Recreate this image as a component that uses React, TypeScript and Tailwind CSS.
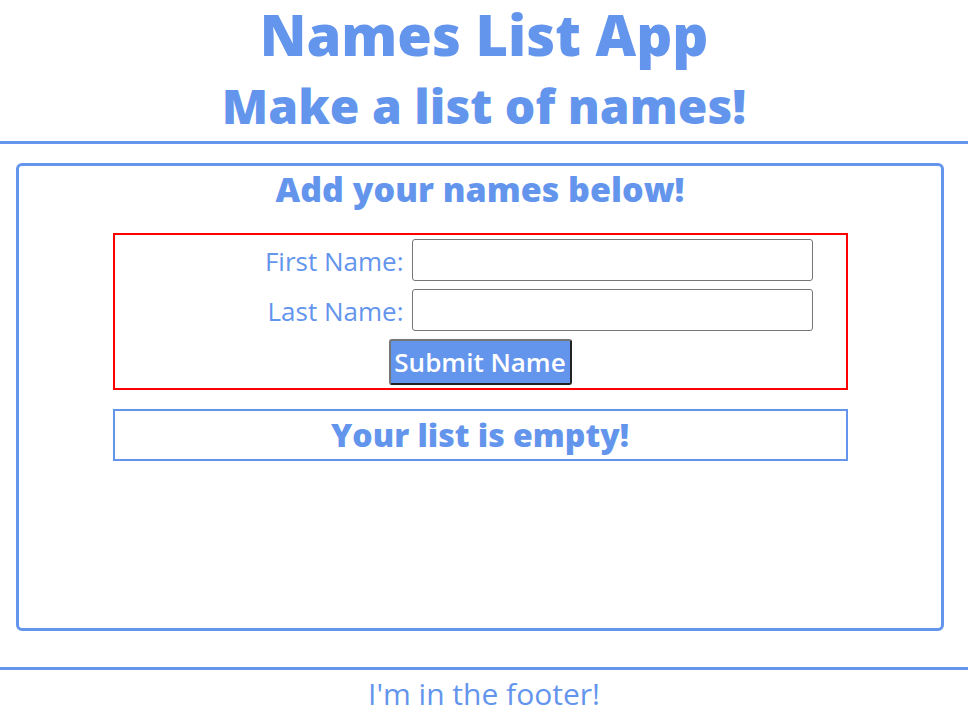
import React, { useState } from 'react';

const font = { fontFamily: '"Open Sans", Lato, sans-serif' };

const NamesForm = () => {
  const [first, setFirst] = useState('');
  const [last, setLast] = useState('');

  return (
    <form
      className="mx-auto mt-[22px] flex h-[157px] w-[735px] flex-col items-center border-2 border-[#ff0000] pt-[4px]"
      onSubmit={(e) => e.preventDefault()}
    >
      <div className="flex h-[50px] w-full items-start">
        <label className="w-[297px] pr-[8px] pt-[5px] text-right text-[26px] leading-[34px] text-[#6495ed]">
          First Name:
        </label>
        <input
          value={first}
          onChange={(e) => setFirst(e.target.value)}
          className="h-[42px] w-[401px] rounded-[3px] border border-[#767676] bg-white"
        />
      </div>
      <div className="flex h-[50px] w-full items-start">
        <label className="w-[297px] pr-[8px] pt-[5px] text-right text-[26px] leading-[34px] text-[#6495ed]">
          Last Name:
        </label>
        <input
          value={last}
          onChange={(e) => setLast(e.target.value)}
          className="h-[42px] w-[401px] rounded-[3px] border border-[#767676] bg-white"
        />
      </div>
      <button
        type="submit"
        className="h-[46px] w-[183px] rounded-[3px] border-2 border-t-[#767676] border-l-[#767676] border-r-[#222] border-b-[#222] bg-[#6495ed] text-[26px] font-semibold leading-[40px] text-white"
      >
        Submit Name
      </button>
    </form>
  );
};

export default function App() {
  return (
    <div className="flex h-[712px] w-[968px] flex-col overflow-hidden bg-white" style={font}>
      <header className="flex h-[141px] shrink-0 flex-col items-center">
        <h1 className="h-[68px] text-[56px] font-extrabold leading-[68px] text-[#6495ed]">
          Names List App
        </h1>
        <h2 className="mt-[8px] h-[60px] text-[48px] font-extrabold leading-[60px] text-[#6495ed]">
          Make a list of names!
        </h2>
      </header>
      <div className="h-[3px] w-full shrink-0 bg-[#6495ed]" />

      <main className="ml-[16px] mt-[19px] h-[468px] w-[928px] shrink-0 rounded-[6px] border-[3px] border-[#6495ed]">
        <h3 className="mt-[1px] text-center text-[34px] font-extrabold leading-[44px] text-[#6495ed]">
          Add your names below!
        </h3>
        <NamesForm />
        <div className="mx-auto mt-[19px] flex h-[52px] w-[735px] items-center justify-center border-2 border-[#6495ed]">
          <span className="text-[32px] font-extrabold leading-[40px] text-[#6495ed]">Your list is empty!</span>
        </div>
      </main>

      <div className="mt-[36px] h-[3px] w-full shrink-0 bg-[#6495ed]" />
      <footer className="shrink-0 pt-[6px] text-center text-[30px] leading-[36px] text-[#6495ed]">
        I'm in the footer!
      </footer>
    </div>
  );
}
